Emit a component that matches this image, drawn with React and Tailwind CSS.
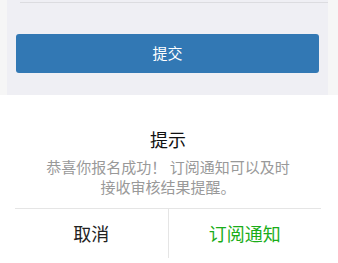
import React from 'react';

export default function App() {
  return (
    <div
      className="w-[338px] h-[263px] overflow-hidden bg-white"
      style={{ fontFamily: '"Noto Sans CJK SC", "Noto Sans", sans-serif' }}
    >
      {/* 表单底部 */}
      <div className="h-[95px] bg-[#f6f6f6] pl-[7px] pr-[10px]">
        <div className="h-full bg-[#efeff4] pt-[2px]">
          <div className="ml-[13px] h-px bg-[#dcdce0]" />
          <div className="px-[9px] pt-[31px]">
            <button className="w-full h-[39px] rounded-[3px] bg-[#3278b4] text-white text-[15px] flex items-center justify-center">
              提交
            </button>
          </div>
        </div>
      </div>

      {/* 提示弹窗 */}
      <div className="mx-[15px] w-[306px] bg-white">
        <div className="pt-[32px] px-[24px] pb-[11px] text-center">
          <h3 className="text-[18px] leading-[24px] text-[#111]">提示</h3>
          <p className="mt-[6px] text-[15px] leading-[20px] text-[#999]">
            恭喜你报名成功！ 订阅通知可以及时接收审核结果提醒。
          </p>
        </div>
        <div className="flex border-t border-[#e5e5e5] h-[50px]">
          <button className="flex-1 text-[18px] text-[#222] flex items-center justify-center">取消</button>
          <button className="flex-1 border-l border-[#e5e5e5] text-[18px] text-[#1aad19] flex items-center justify-center">
            订阅通知
          </button>
        </div>
      </div>
    </div>
  );
}
